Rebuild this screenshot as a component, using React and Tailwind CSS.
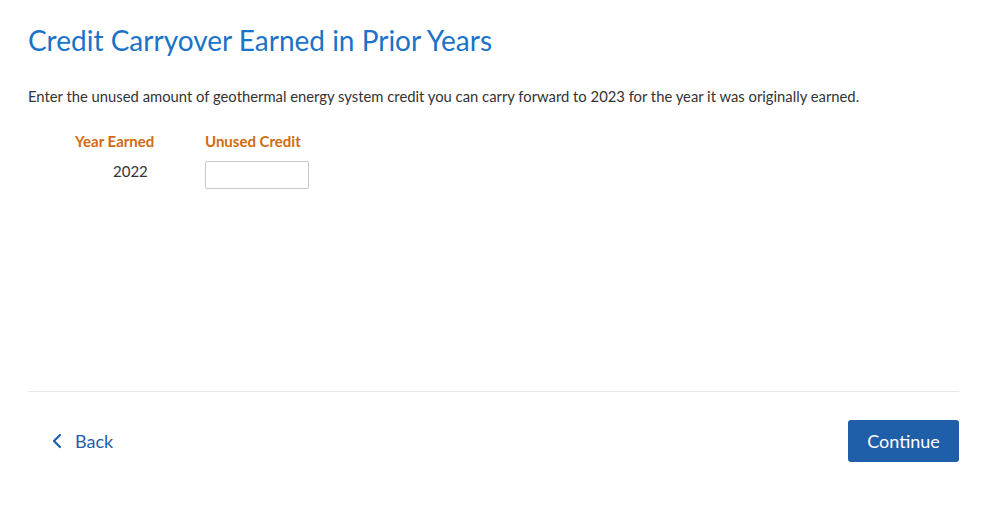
import React from "react";

export default function App() {
  return (
    <div className="w-[999px] h-[517px] bg-white overflow-hidden" style={{ fontFamily: "Lato, 'Open Sans', sans-serif" }}>
      <div className="px-[28px] pt-[22px]">
        <h1 className="text-[28px] leading-[36px] text-[#1a73c7] font-normal">Credit Carryover Earned in Prior Years</h1>
        <p className="mt-[27px] text-[14.8px] leading-[22px] text-[#333]">Enter the unused amount of geothermal energy system credit you can carry forward to 2023 for the year it was originally earned.</p>
        <div className="mt-[25px] flex pl-[47px]">
          <div className="w-[130px] flex flex-col">
            <div className="text-[15px] leading-[18px] font-bold text-[#d06b10]">Year Earned</div>
            <div className="mt-[7px] h-[28px] flex items-center pl-[38px] text-[15px] text-[#333]">2022</div>
          </div>
          <div className="flex flex-col">
            <div className="text-[15px] leading-[18px] font-bold text-[#d06b10]">Unused Credit</div>
            <input className="mt-[11px] w-[104px] h-[28px] border border-[#c8c8c8] rounded-[2px] outline-none" />
          </div>
        </div>
        <div className="mt-[202px] border-t border-[#e6e6e6] w-[931px]"></div>
        <div className="mt-[28px] flex items-center justify-between w-[931px]">
          <button className="flex items-center gap-[13px] pl-[24px] text-[18px] text-[#1f5ea8]">
            <svg width="10" height="16" viewBox="0 0 10 16" fill="none" stroke="#1f5ea8" strokeWidth="2.2" strokeLinecap="round" strokeLinejoin="round"><path d="M8 2 L2 8 L8 14" /></svg>
            <span>Back</span>
          </button>
          <button className="w-[111px] h-[42px] rounded-[3px] bg-[#1f5ea8] text-white text-[18px]">Continue</button>
        </div>
      </div>
    </div>
  );
}
